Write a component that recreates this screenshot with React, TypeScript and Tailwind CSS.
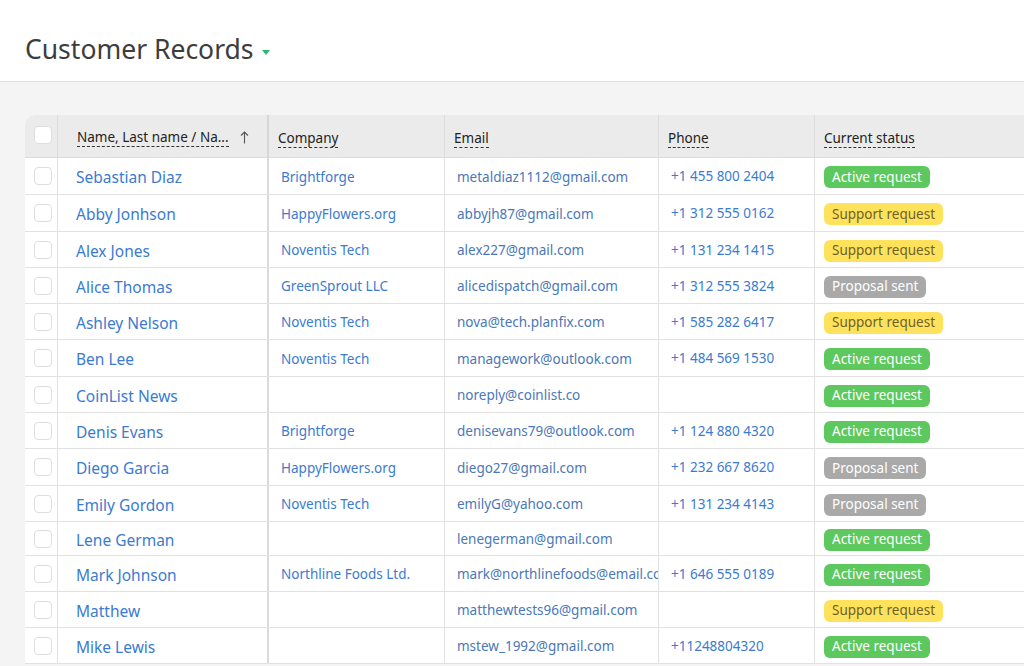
import React from "react";

type Status = "active" | "support" | "proposal";
type Row = { name: string; company: string; email: string; phone: string; status: Status; h: string };

const rows: Row[] = [
  { name: "Sebastian Diaz", company: "Brightforge", email: "metaldiaz1112@gmail.com", phone: "+1 455 800 2404", status: "active", h: "h-[37px]" },
  { name: "Abby Jonhson", company: "HappyFlowers.org", email: "abbyjh87@gmail.com", phone: "+1 312 555 0162", status: "support", h: "h-[37px]" },
  { name: "Alex Jones", company: "Noventis Tech", email: "alex227@gmail.com", phone: "+1 131 234 1415", status: "support", h: "h-[36px]" },
  { name: "Alice Thomas", company: "GreenSprout LLC", email: "alicedispatch@gmail.com", phone: "+1 312 555 3824", status: "proposal", h: "h-[36px]" },
  { name: "Ashley Nelson", company: "Noventis Tech", email: "nova@tech.planfix.com", phone: "+1 585 282 6417", status: "support", h: "h-[36px]" },
  { name: "Ben Lee", company: "Noventis Tech", email: "managework@outlook.com", phone: "+1 484 569 1530", status: "active", h: "h-[37px]" },
  { name: "CoinList News", company: "", email: "noreply@coinlist.co", phone: "", status: "active", h: "h-[36px]" },
  { name: "Denis Evans", company: "Brightforge", email: "denisevans79@outlook.com", phone: "+1 124 880 4320", status: "active", h: "h-[36px]" },
  { name: "Diego Garcia", company: "HappyFlowers.org", email: "diego27@gmail.com", phone: "+1 232 667 8620", status: "proposal", h: "h-[37px]" },
  { name: "Emily Gordon", company: "Noventis Tech", email: "emilyG@yahoo.com", phone: "+1 131 234 4143", status: "proposal", h: "h-[36px]" },
  { name: "Lene German", company: "", email: "lenegerman@gmail.com", phone: "", status: "active", h: "h-[34px]" },
  { name: "Mark Johnson", company: "Northline Foods Ltd.", email: "mark@northlinefoods@email.com", phone: "+1 646 555 0189", status: "active", h: "h-[36px]" },
  { name: "Matthew", company: "", email: "matthewtests96@gmail.com", phone: "", status: "support", h: "h-[36px]" },
  { name: "Mike Lewis", company: "", email: "mstew_1992@gmail.com", phone: "+11248804320", status: "active", h: "h-[36px]" },
];

function Badge({ status }: { status: Status }) {
  if (status === "active")
    return <span className="inline-flex items-center h-[22px] px-[8px] rounded-[6px] bg-[#5cc85e] text-white text-[13.5px]">Active request</span>;
  if (status === "support")
    return <span className="inline-flex items-center h-[22px] px-[8px] rounded-[6px] bg-[#ffe25c] text-[#6e6226] text-[13.5px]">Support request</span>;
  return <span className="inline-flex items-center h-[22px] px-[8px] rounded-[6px] bg-[#a9a9a9] text-white text-[13.5px]">Proposal sent</span>;
}

function Check() {
  return <div className="w-[18px] h-[18px] rounded-[4px] border border-[#dedede] bg-white" />;
}

export default function App() {
  const font = { fontFamily: '"Segoe UI", "Noto Sans", "Open Sans", sans-serif' };
  return (
    <div className="w-[1024px] h-[666px] overflow-hidden bg-[#f4f4f4]" style={font}>
      <div className="h-[82px] bg-white border-b border-[#e0e0e0] flex items-end pb-[12px] pl-[25px]">
        <h1 className="text-[26.5px] leading-[40px] text-[#3d3d3d] font-normal flex items-center">
          Customer Records
          <span className="ml-[8px] mt-[6px] w-0 h-0 border-l-[4px] border-r-[4px] border-t-[5px] border-l-transparent border-r-transparent border-t-[#2bb673]" />
        </h1>
      </div>
      <div className="pt-[33px] pl-[25px]">
        <div className="w-[1100px] bg-white rounded-tl-[10px] overflow-hidden">
          <div className="grid grid-cols-[33px_211px_176px_214px_156px_306px] h-[43px] bg-[#ebebeb] border-b border-[#dcdcdc] text-[13.5px] text-[#222]">
            <div className="border-r border-[#dcdcdc] flex items-start pt-[11px] pl-[9px]"><Check /></div>
            <div className="border-r-2 border-[#d6d6d6] flex items-center pl-[19px] pt-[2px]">
              <span className="border-b border-dashed border-[#333] leading-[18px]">Name, Last name / Na...</span>
              <svg className="ml-[11px]" width="9" height="13" viewBox="0 0 9 13" fill="none" stroke="#555" strokeWidth="1.1">
                <path d="M4.5 12.5V1" />
                <path d="M1 4.5L4.5 1L8 4.5" />
              </svg>
            </div>
            <div className="border-r border-[#dcdcdc] flex items-center pl-[9px] pt-[4px]">
              <span className="border-b border-dashed border-[#333] leading-[18px]">Company</span>
            </div>
            <div className="border-r border-[#dcdcdc] flex items-center pl-[9px] pt-[4px]">
              <span className="border-b border-dashed border-[#333] leading-[18px]">Email</span>
            </div>
            <div className="border-r border-[#dcdcdc] flex items-center pl-[9px] pt-[4px]">
              <span className="border-b border-dashed border-[#333] leading-[18px]">Phone</span>
            </div>
            <div className="flex items-center pl-[9px] pt-[4px]">
              <span className="border-b border-dashed border-[#333] leading-[18px]">Current status</span>
            </div>
          </div>
          {rows.map((r) => (
            <div key={r.name} className={`grid grid-cols-[33px_211px_176px_214px_156px_306px] ${r.h} border-b border-[#e2e2e2]`}>
              <div className="border-r border-[#e2e2e2] flex items-center pl-[9px]"><Check /></div>
              <div className="border-r-2 border-[#dadada] flex items-center pl-[18px] pt-[4px] text-[15.5px] text-[#3b7bd0]">{r.name}</div>
              <div className="border-r border-[#e2e2e2] flex items-center pl-[12px] pt-[2px] text-[13.5px] text-[#3b7bd0] whitespace-nowrap overflow-hidden">{r.company}</div>
              <div className="border-r border-[#e2e2e2] flex items-center pl-[12px] pt-[2px] text-[13.5px] text-[#4a78b8] whitespace-nowrap overflow-hidden">
                <span className="block w-[201px] overflow-hidden">{r.email}</span>
              </div>
              <div className="border-r border-[#e2e2e2] flex items-center pl-[12px] pt-[1px] text-[13.5px] text-[#3b7bd0] whitespace-nowrap">{r.phone}</div>
              <div className="flex items-center pl-[9px] pt-[2px]"><Badge status={r.status} /></div>
            </div>
          ))}
        </div>
      </div>
    </div>
  );
}
